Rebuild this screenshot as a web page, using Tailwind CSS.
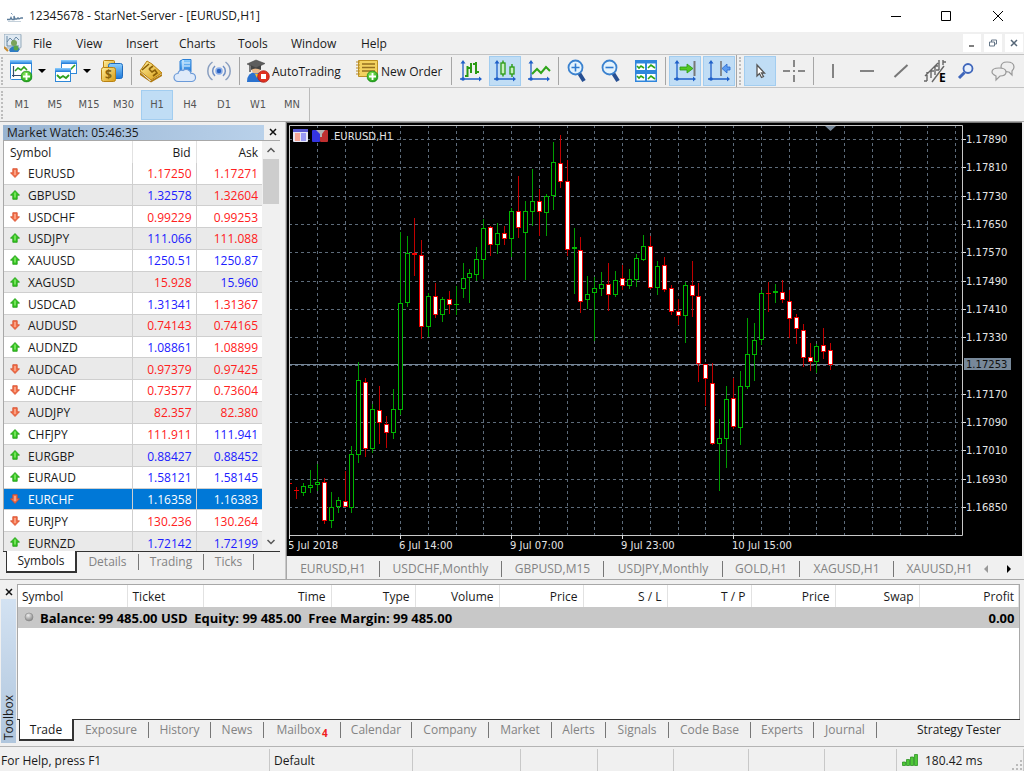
<!DOCTYPE html>
<html lang="en">
<head>
    <meta charset="UTF-8">
    <meta name="viewport" content="width=device-width, initial-scale=1.0">
    <title>12345678 - StarNet-Server - [EURUSD,H1]</title>
    <script src="https://cdn.jsdelivr.net/npm/@tailwindcss/browser@4"></script>
</head>
<body class="bg-[#f0f0f0] text-[#1a1a1a] text-[12px] leading-4 font-['Open_Sans','Noto_Sans',sans-serif]">

    <!-- Shared icons -->
    <svg class="absolute w-0 h-0" aria-hidden="true">
        <defs>
            <linearGradient id="blue" x1="0" y1="0" x2="0" y2="1"><stop offset="0" stop-color="#8fd0ff"/><stop offset="1" stop-color="#1c78d8"/></linearGradient>
            <linearGradient id="gold" x1="0" y1="0" x2="1" y2="1"><stop offset="0" stop-color="#fff0a0"/><stop offset="1" stop-color="#d79a10"/></linearGradient>
            <radialGradient id="green" cx=".4" cy=".3" r=".8"><stop offset="0" stop-color="#8ae85c"/><stop offset="1" stop-color="#129a10"/></radialGradient>
            <radialGradient id="grey" cx=".4" cy=".3" r=".8"><stop offset="0" stop-color="#eeeeee"/><stop offset="1" stop-color="#777777"/></radialGradient>
        </defs>
        <symbol id="plus" viewBox="0 0 12 12"><circle cx="6" cy="6" r="5.5" fill="url(#green)" stroke="#1c8a1c" stroke-width=".8"/><path d="M6 2.5v7M2.5 6h7" stroke="#fff" stroke-width="1.8"/></symbol>
        <symbol id="up" viewBox="0 0 10 10"><path d="M5 .5 9.5 5.2H7.2V9.3H2.8V5.2H.5z" fill="#35c421" stroke="#1f9c14" stroke-width=".8"/><path d="M5 2.5v5" stroke="#8cf070" stroke-width="1.4"/></symbol>
        <symbol id="down" viewBox="0 0 10 10"><path d="M5 9.5 9.5 4.8H7.2V.7H2.8V4.8H.5z" fill="#f0704a" stroke="#d84a28" stroke-width=".8"/><path d="M5 2v5" stroke="#ffb49a" stroke-width="1.4"/></symbol>
        <symbol id="axes" viewBox="0 0 24 24"><path d="M4 3v18M1 20h20" stroke="#1f5fc8" stroke-width="1.3"/><path d="M1.500 4.500 4 1l2.500 3.500zM20 17.500l3 2.500-3 2.500z" fill="#1f5fc8"/><circle cx="4" cy="20" r="1.800" fill="#1f5fc8"/></symbol>
    </svg>

    <div class="flex flex-col min-h-screen">

        <!-- Title bar -->
        <header class="flex items-center h-8 bg-white pl-[7px]">
            <svg class="w-4 h-4 mr-[6px]" viewBox="0 0 16 16" fill="none"><path d="M0 11.500h3l1-2 1 2h2V8l1 3h2q1-2 2 0l2-1h2" stroke="#5d7d9b" stroke-width="1.300"/><path d="M1 13.500h13" stroke="#c4d0da"/><path d="M4 5l1.500 1.500" stroke="#7a9ab8"/></svg>
            <h1 class="flex-1">12345678 - StarNet-Server - [EURUSD,H1]</h1>
            <button aria-label="Minimize" class="w-[50px] h-8 flex items-center justify-center"><svg class="w-3 h-3" viewBox="0 0 12 12"><path d="M1 6.500h10" stroke="#000"/></svg></button>
            <button aria-label="Maximize" class="w-[50px] h-8 flex items-center justify-center"><svg class="w-3 h-3" viewBox="0 0 12 12"><path d="M1.500 1.500h9v9h-9z" fill="none" stroke="#000"/></svg></button>
            <button aria-label="Close" class="w-[53px] h-8 flex items-center justify-center"><svg class="w-3 h-3" viewBox="0 0 12 12"><path d="M1 1l10 10M11 1 1 11" stroke="#000"/></svg></button>
        </header>

        <!-- Menu bar -->
        <nav class="flex items-center h-[22px] pl-1 *:[a]:pt-[2px]">
            <svg class="w-[18px] h-[18px] mr-[1px]" viewBox="0 0 18 18"><rect x="0" y="0" width="17" height="14" rx="1" fill="#dfe9f2" stroke="#93a9ba"/><path d="M3 2v10h12M3 8l3-4 3 3 3-4 3 3" fill="none" stroke="#6b8aa5"/><circle cx="10" cy="9" r="3" fill="#7aa35a"/><path d="M5 16q4-7 11-1l-2 3H6z" fill="#2e7bc4"/><circle cx="12" cy="14" r="2.500" fill="#57a64a"/><path d="M0 13l4 4" stroke="#c78b31" stroke-width="2"/></svg>
            <a href="#" class="px-[10px] w-[46px]">File</a>
            <a href="#" class="px-[7px] w-[50px]">View</a>
            <a href="#" class="px-[7px] w-[54px]">Insert</a>
            <a href="#" class="px-[6px] w-[58px]">Charts</a>
            <a href="#" class="px-[7px] w-[53px]">Tools</a>
            <a href="#" class="px-[7px] w-[70px]">Window</a>
            <a href="#" class="px-[7px]">Help</a>
            <div class="ml-auto flex gap-[3px] pr-[1px]">
                <button aria-label="Minimize chart" class="w-[18px] h-[18px] bg-white flex items-center justify-center"><svg class="w-2 h-2" viewBox="0 0 8 8"><path d="M1 7h5" stroke="#555" stroke-width="1.500"/></svg></button>
                <button aria-label="Restore chart" class="w-[18px] h-[18px] bg-white flex items-center justify-center"><svg class="w-2 h-2" viewBox="0 0 8 8" fill="none" stroke="#678"><path d="M2.500 3V1h5v4H5.500"/><path d="M.5 3h5v4h-5z"/></svg></button>
                <button aria-label="Close chart" class="w-[18px] h-[18px] bg-white flex items-center justify-center"><svg class="w-2 h-2" viewBox="0 0 8 8"><path d="M1 1l6 6M7 1 1 7" stroke="#567" stroke-width="1.500"/></svg></button>
            </div>
        </nav>

        <!-- Main toolbar -->
        <div class="flex items-center h-[34px] border-t border-b border-[#c3c3c3] overflow-hidden *:shrink-0">
            <div class="w-[2px] h-7 ml-[1px] mr-[6px] border-l-2 border-dotted border-[#bdbdbd]"></div>
            <button aria-label="New chart" class="flex items-center w-[45px]">
                <svg class="w-6 h-6" viewBox="0 0 24 24"><rect x="1.500" y="1.500" width="21" height="19" rx="1" fill="#fff" stroke="#2f88d8"/><path d="M1 1h22v4H1z" fill="url(#blue)"/><path d="M4.500 7v11M3 16.500h15" stroke="#36506e" stroke-width="1.200"/><path d="M6 12l3-3 3 2 3-3 3 3" fill="none" stroke="#2fa01e" stroke-width="1.600"/><use href="#plus" x="11.500" y="11.500" width="12" height="12"/></svg>
                <svg class="w-2 h-1 ml-[5px]" viewBox="0 0 8 4"><path d="M0 0h8L4 4z"/></svg>
            </button>
            <button aria-label="Profiles" class="flex items-center w-[46px]">
                <svg class="w-6 h-6" viewBox="0 0 24 24"><rect x="7.500" y="1.500" width="15" height="13" fill="#fff" stroke="#2f88d8"/><path d="M7 1h16v4H7z" fill="url(#blue)"/><path d="M16 11l5-5" stroke="#2fa01e" stroke-width="1.600"/><rect x="1.500" y="9.500" width="15" height="13" fill="#fff" stroke="#2f88d8"/><path d="M1 9h16v4H1z" fill="url(#blue)"/><path d="M3 16l3 3 3-2 3 2 3-3" fill="none" stroke="#2fa01e" stroke-width="1.800"/></svg>
                <svg class="w-2 h-1 ml-[5px]" viewBox="0 0 8 4"><path d="M0 0h8L4 4z"/></svg>
            </button>
            <button aria-label="Market watch" class="w-6"><svg class="w-6 h-6" viewBox="0 0 24 24"><rect x="3.500" y="1.500" width="11" height="13" rx="1" fill="url(#gold)" stroke="#b98212"/><rect x="8.500" y="4.500" width="14" height="15" rx="2" fill="url(#blue)" stroke="#1f6cc0"/><rect x="1.500" y="8.500" width="14" height="14" rx="2" fill="url(#gold)" stroke="#b98212"/><text x="8.500" y="20" font-size="12" font-weight="700" text-anchor="middle" fill="#8a6410">$</text></svg></button>
            <div class="w-px h-7 ml-[7px] mr-[2px] bg-[#a6a6a6]"></div>

            <button aria-label="Depth of market" class="w-[34px] flex justify-center"><svg class="w-6 h-6" viewBox="0 0 24 24"><path d="M1 13 11 22l12-7v2L12 23.500 1 16z" fill="#b07a10"/><path d="M8 2l5 3 10 9-11 7L1 12z" fill="url(#gold)" stroke="#b98212"/><path d="M3 11l7-6M10 10l4-3M10 10l3 3 3-2 2 3-4 3" fill="none" stroke="#8a5f08" stroke-width="1.600"/></svg></button>
            <button aria-label="Cloud storage" class="w-[34px] flex justify-center"><svg class="w-6 h-6" viewBox="0 0 24 24"><path d="M7 2l3-1.500h8V13H7z" fill="url(#blue)" stroke="#2a7fd6"/><path d="M10 1v11M11 4h6M11 7h6" stroke="#e8f6ff" stroke-width="1.200"/><path d="M5 22.500a4 4 0 0 1 0-8 3.500 3.500 0 0 1 5-3 5 5 0 0 1 8 3 4 4 0 0 1 1 8z" fill="#dfeaf9" stroke="#6b9ad8" stroke-width="1.200"/></svg></button>
            <button aria-label="Signals" class="w-[34px] flex justify-center"><svg class="w-6 h-6" viewBox="0 0 24 24" fill="none" stroke="#6f8fc4" stroke-width="1.500"><circle cx="12" cy="12" r="3" fill="#2d66c4" stroke="#8fb0e8"/><path d="M8 7a6.500 6.500 0 0 0 0 10M16 7a6.500 6.500 0 0 1 0 10"/><path d="M5.500 3a11 11 0 0 0 0 18M18.500 3a11 11 0 0 1 0 18" stroke="#8a9fc0"/></svg></button>
            <div class="w-px h-7 ml-[3px] mr-[6px] bg-[#a6a6a6]"></div>

            <button class="flex items-center gap-[2px] w-[109px]">
                <svg class="w-6 h-6" viewBox="0 0 24 24"><path d="M1 23q0-10 9-10t9 10z" fill="#2a72cf"/><circle cx="10" cy="10" r="4.500" fill="#e9b98c"/><path d="M5 6v5q4-3 10 0V6z" fill="#444"/><path d="M1 5l9-4 9 3.500L10 9z" fill="#5d5d5d" stroke="#3a3a3a" stroke-width=".5"/><path d="M4 6v7" stroke="#555" stroke-width="1.500"/><path d="M9 15l2 4 2-4z" fill="#f1c232"/><circle cx="17.500" cy="17.500" r="5.800" fill="#e03020" stroke="#b02015" stroke-width=".8"/><rect x="15" y="15" width="5" height="5" fill="#fff"/></svg>
                <span class="pt-[2px]">AutoTrading</span>
            </button>
            <button class="flex items-center gap-[2px] w-[96px]">
                <svg class="w-6 h-6" viewBox="0 0 24 24"><path d="M3.500 1.500h19v16h-19z" fill="#f3d25f" stroke="#bd9123"/><path d="M7 5h13M7 8.500h13M7 12h13" stroke="#957020" stroke-width="1.300"/><path d="M1 3h4M1 6h4M1 9h4M1 12h4M1 15h4" stroke="#b98c28"/><use href="#plus" x="11.500" y="11.500" width="12" height="12"/></svg>
                <span class="pt-[2px]">New Order</span>
            </button>
            <div class="w-px h-7 mr-[2px] bg-[#a6a6a6]"></div>

            <button aria-label="Bar chart" class="w-[34px] flex justify-center"><svg class="w-6 h-6" viewBox="0 0 24 24"><use href="#axes"/><path d="M8.500 7v11M6 17h2.500M8.500 9H12M12 4v10M17 3v12M14 5h3M17 13h3" fill="none" stroke="#2a9a12" stroke-width="2"/></svg></button>
            <button aria-label="Candlesticks" class="w-8 mx-px h-[30px] flex justify-center items-center bg-[#c0ddf5] border border-[#a2cdf0]"><svg class="w-6 h-6" viewBox="0 0 24 24"><use href="#axes"/><path d="M10 1.500v16M19 5v13" stroke="#2a9a12" stroke-width="1.400"/><rect x="8" y="4" width="4" height="11" fill="#c8f0c0" stroke="#2a9a12" stroke-width="1.300"/><rect x="17" y="8" width="4" height="7" fill="#c8f0c0" stroke="#2a9a12" stroke-width="1.300"/></svg></button>
            <button aria-label="Line chart" class="w-[34px] flex justify-center"><svg class="w-6 h-6" viewBox="0 0 24 24"><use href="#axes"/><path d="M5 15l5-5 4 4 5-6 4 4" fill="none" stroke="#2fa51a" stroke-width="2"/></svg></button>
            <div class="w-px h-7 mx-[2px] bg-[#a6a6a6]"></div>

            <button aria-label="Zoom in" class="w-[34px] flex justify-center"><svg class="w-6 h-6" viewBox="0 0 24 24"><path d="M13 14l5 8" stroke="#274f92" stroke-width="4"/><circle cx="9.500" cy="8.500" r="7" fill="#e4f3fd" stroke="#3b82cf" stroke-width="1.800"/><path d="M5.500 8.500h8M9.500 4.500v8" stroke="#2f7bd0" stroke-width="1.600"/></svg></button>
            <button aria-label="Zoom out" class="w-[34px] flex justify-center"><svg class="w-6 h-6" viewBox="0 0 24 24"><path d="M13 14l5 8" stroke="#274f92" stroke-width="4"/><circle cx="9.500" cy="8.500" r="7" fill="#e4f3fd" stroke="#3b82cf" stroke-width="1.800"/><path d="M5.500 8.500h8" stroke="#2f7bd0" stroke-width="1.600"/></svg></button>
            <button aria-label="Tile windows" class="w-[34px] flex justify-center"><svg class="w-6 h-6" viewBox="0 0 24 24"><rect x="1" y="1" width="22" height="22" fill="#2f86dc"/><path d="M2.500 4.500H11V11H2.500zM13 4.500h8.500V11H13zM2.500 15H11v6.500H2.500zM13 15h8.500v6.500H13z" fill="#fff"/><path d="M3 7l2 2 2-2 3 2M14 9l3-3 4 3M3 17l2 2 2-2 3 2M14 20l3-3 4 3" fill="none" stroke="#2fa51a" stroke-width="1.600"/></svg></button>
            <div class="w-px h-7 mx-[2px] bg-[#a6a6a6]"></div>

            <button aria-label="Auto scroll" class="w-8 mx-px h-[30px] flex justify-center items-center bg-[#c0ddf5] border border-[#a2cdf0]"><svg class="w-6 h-6" viewBox="0 0 24 24"><use href="#axes"/><path d="M21.500 2v15" stroke="#777" stroke-width="2"/><path d="M7 8h7V5l6 4.500-6 4.500v-3H7z" fill="#52c822" stroke="#2a9a12" stroke-width=".8"/></svg></button>
            <button aria-label="Chart shift" class="w-8 mx-px h-[30px] flex justify-center items-center bg-[#c0ddf5] border border-[#a2cdf0]"><svg class="w-6 h-6" viewBox="0 0 24 24"><use href="#axes"/><path d="M14 2v15" stroke="#777" stroke-width="1.600"/><path d="M23 8h-3V5l-5 4.500 5 4.500v-3h3z" fill="#5b9cf0" stroke="#2a68cc" stroke-width=".8"/></svg></button>
            <div class="w-px h-8 bg-[#a6a6a6]"></div>
            <div class="w-[2px] h-7 mx-[2px] border-l-2 border-dotted border-[#bdbdbd]"></div>

            <button aria-label="Cursor" class="w-8 mx-px h-[30px] flex justify-center items-center bg-[#c0ddf5] border border-[#a2cdf0]"><svg class="w-6 h-6" viewBox="0 0 24 24"><path d="M9 6v11l2.500-2.500 2 4 2-1-2-3.500h3z" fill="#fff" stroke="#555" stroke-width="1.300"/></svg></button>
            <button aria-label="Crosshair" class="w-[34px] flex justify-center"><svg class="w-6 h-6" viewBox="0 0 24 24"><path d="M12 1v7M12 16v7M1 12h7M16 12h7M11 12h2" stroke="#666" stroke-width="1.500"/></svg></button>
            <div class="w-px h-7 mx-[2px] bg-[#a6a6a6]"></div>

            <button aria-label="Vertical line" class="w-[34px] flex justify-center"><svg class="w-6 h-6" viewBox="0 0 24 24"><path d="M12 5v14" stroke="#777" stroke-width="1.800"/></svg></button>
            <button aria-label="Horizontal line" class="w-[34px] flex justify-center"><svg class="w-6 h-6" viewBox="0 0 24 24"><path d="M5 12h14" stroke="#777" stroke-width="1.800"/></svg></button>
            <button aria-label="Trendline" class="w-[34px] flex justify-center"><svg class="w-6 h-6" viewBox="0 0 24 24"><path d="M5.500 18 18.500 6" stroke="#777" stroke-width="2"/></svg></button>
            <button aria-label="Elliott wave" class="w-[34px] flex justify-center"><svg class="w-6 h-6" viewBox="0 0 24 24"><path d="M9 23 21 7M2 17 15 4M4 13v9M1 22h3M8 12v7M12 7v9M8 12h3M12 7h3M16 1v10M20 1v5M13 11h3M20 3h3" fill="none" stroke="#666" stroke-width="1.400"/><text x="16" y="23" font-size="12" font-weight="700" fill="#000">E</text></svg></button>
            <button aria-label="Search" class="w-[28px] flex justify-center"><svg class="w-6 h-6" viewBox="0 0 24 24"><path d="M10.500 13.500 5 19" stroke="#3f66bb" stroke-width="3"/><circle cx="14" cy="9.500" r="4.500" fill="#e8f0fc" stroke="#3f66bb" stroke-width="1.800"/></svg></button>
            <button aria-label="Chat" class="ml-[11px] flex justify-center"><svg class="w-6 h-6" viewBox="0 0 24 24" fill="#eee" stroke="#999" stroke-width="1.200"><path d="M16 3c5 0 7 2 7 5 0 2-1 3-2 4v4l-3-3c-6 0-8-2-8-5s2-5 6-5z"/><path d="M8 9c4 0 7 1 7 4s-3 4-6 4l-4 4v-4c-2-1-4-2-4-4s2-4 7-4z"/></svg></button>
        </div>

        <!-- Timeframes -->
        <div class="flex items-center h-[34px] border-b border-[#a8a8a8] text-[#555] text-[11px] font-['DejaVu_Sans_Condensed','DejaVu_Sans',sans-serif]">
            <div class="w-[2px] h-7 ml-[1px] mr-[3px] border-l-2 border-dotted border-[#bdbdbd]"></div>
            <div class="flex items-center h-full border-r border-[#bbb]">
                <button class="w-[32px]">M1</button>
                <button class="w-[34px]">M5</button>
                <button class="w-[34px]">M15</button>
                <button class="w-[35px]">M30</button>
                <button class="w-8 h-[30px] bg-[#c0ddf5] border border-[#a2cdf0]">H1</button>
                <button class="w-[34px]">H4</button>
                <button class="w-[34px]">D1</button>
                <button class="w-[34px]">W1</button>
                <button class="w-[34px]">MN</button>
            </div>
        </div>

        <main class="flex flex-1 min-h-0 border-b border-[#a8a8a8]">

            <!-- Market watch -->
            <section class="flex flex-col w-[286px] pt-[2px] pl-[3px] pr-[5px] pb-[4px] border-r border-[#c8c8c8]">
                <div class="flex h-4 items-center">
                    <h2 class="flex-1 h-[15px] leading-[15px] pl-[4px] bg-linear-to-r from-[#98b4d2] to-[#b9d1ea]">Market Watch: 05:46:35</h2>
                    <button aria-label="Close market watch" class="w-[14px] ml-[2px] flex justify-center"><svg class="w-2 h-2" viewBox="0 0 8 8"><path d="M1 1l6 6M7 1 1 7" stroke="#111" stroke-width="1.500"/></svg></button>
                </div>
                <div class="flex h-[411px] overflow-hidden border-t border-l border-[#a8a8a8]">
                    <div class="flex-1">
                        <table class="w-full h-[413px] table-fixed border-collapse bg-white">
                            <thead>
                                <tr class="h-[22px] *:pt-[2px]">
                                    <th class="pl-[6px] text-left font-normal border-r border-[#e2e2e2]">Symbol</th>
                                    <th class="w-[64px] pr-[5px] text-right font-normal border-r border-[#e2e2e2]">Bid</th>
                                    <th class="w-[66px] pr-[4px] text-right font-normal">Ask</th>
                                </tr>
                            </thead>
                            <tbody id="quotes"></tbody>
                        </table>
                    </div>
                    <div class="flex flex-col items-center w-[18px]">
                        <svg class="w-2 h-2 my-[5px] shrink-0" viewBox="0 0 8 8"><path d="M.5 6 4 2.500 7.500 6" fill="none" stroke="#555" stroke-width="1.500"/></svg>
                        <div class="w-4 h-[45px] bg-[#cdcdcd]"></div>
                        <svg class="w-2 h-2 mt-auto mb-[5px]" viewBox="0 0 8 8"><path d="M.5 2 4 5.500 7.500 2" fill="none" stroke="#555" stroke-width="1.500"/></svg>
                    </div>
                </div>
                <div class="flex items-start h-[22px] border-t border-[#333] text-[#838383]">
                    <button class="w-[71px] h-[22px] -mt-px ml-[3px] bg-white border-l border-r-2 border-b-2 border-[#333] text-[#1a1a1a]">Symbols</button>
                    <button class="w-[62px] h-4 mt-[2px] border-r border-[#777]">Details</button>
                    <button class="w-[65px] h-4 mt-[2px] border-r border-[#777]">Trading</button>
                    <button class="w-[50px] h-4 mt-[2px] border-r border-[#777]">Ticks</button>
                </div>
            </section>

            <!-- Chart -->
            <section class="flex-1 flex flex-col min-w-0 pr-[2px]">
                <div class="bg-black h-[434px] pt-px pl-[2px] border-t border-l border-[#777]">
                    <svg id="chart" class="w-full h-full" viewBox="289 124 733 432" preserveAspectRatio="xMinYMin meet" font-family="'DejaVu Sans', sans-serif" font-size="10" fill="#e4e4e4"></svg>
                </div>
                <div class="flex items-center h-[23px] pt-[2px] text-[#838383] overflow-hidden border-l border-[#a8a8a8]">
                    <div class="flex flex-1 min-w-0 overflow-hidden whitespace-nowrap *:shrink-0 *:border-r *:border-[#777]">
                        <button class="w-[93px]">EURUSD,H1</button>
                        <button class="w-[122px]">USDCHF,Monthly</button>
                        <button class="w-[102px]">GBPUSD,M15</button>
                        <button class="w-[119px]">USDJPY,Monthly</button>
                        <button class="w-[77px]">GOLD,H1</button>
                        <button class="w-[94px]">XAGUSD,H1</button>
                        <button class="w-[92px]">XAUUSD,H1</button>
                    </div>
                    <button aria-label="Previous tabs" class="ml-[13px]"><svg class="w-1 h-2" viewBox="0 0 4 8"><path d="M4 0v8L0 4z" fill="#999"/></svg></button>
                    <button aria-label="Next tabs" class="ml-[19px] mr-[11px]"><svg class="w-1 h-2" viewBox="0 0 4 8"><path d="M0 0v8l4-4z" fill="#000"/></svg></button>
                </div>
            </section>
        </main>

        <!-- Toolbox -->
        <section class="flex h-[167px] pt-[4px] pr-[4px] pb-[3px] border-b border-[#b4b4b4]">
            <div class="flex flex-col items-center w-[17px]">
                <button aria-label="Close toolbox" class="w-4 h-[15px] flex items-center justify-center"><svg class="w-2 h-2" viewBox="0 0 8 8"><path d="M1 1l6 6M7 1 1 7" stroke="#111" stroke-width="1.500"/></svg></button>
                <h2 class="flex-1 w-[15px] leading-[15px] rotate-180 [writing-mode:vertical-rl] pt-[3px] bg-linear-to-b from-[#b0c6dd] to-[#d3e2f2]">Toolbox</h2>
            </div>
            <div class="flex-1 flex flex-col min-w-0">
                <div class="flex-1 bg-white border-t border-l border-r border-[#a8a8a8]">
                    <table class="w-full table-fixed border-collapse">
                        <thead>
                            <tr class="h-[22px] *:pt-[2px] *:font-normal *:border-r *:border-[#e2e2e2]">
                                <th class="w-[109px] pl-[4px] text-left">Symbol</th>
                                <th class="w-[76px] pl-[5px] text-left">Ticket</th>
                                <th class="w-[128px] pr-[5px] text-right">Time</th>
                                <th class="w-[84px] pr-[5px] text-right">Type</th>
                                <th class="w-[84px] pr-[5px] text-right">Volume</th>
                                <th class="w-[84px] pr-[5px] text-right">Price</th>
                                <th class="w-[84px] pr-[5px] text-right">S / L</th>
                                <th class="w-[84px] pr-[5px] text-right">T / P</th>
                                <th class="w-[84px] pr-[5px] text-right">Price</th>
                                <th class="w-[84px] pr-[5px] text-right">Swap</th>
                                <th class="pr-[4px] text-right">Profit</th>
                            </tr>
                        </thead>
                        <tbody>
                            <tr class="h-[21px] bg-[#c8c8c8] text-[13px] text-black font-bold">
                                <td colspan="10" class="pl-[6px] whitespace-pre"><svg class="inline w-[10px] h-[10px] mr-[6px] -mt-1" viewBox="0 0 10 10"><circle cx="5" cy="5" r="4" fill="url(#grey)" stroke="#888" stroke-width=".6"/></svg>Balance: 99 485.00 USD  Equity: 99 485.00  Free Margin: 99 485.00</td>
                                <td class="pr-[4px] text-right">0.00</td>
                            </tr>
                        </tbody>
                    </table>
                </div>
                <div class="flex items-start h-6 border-t border-[#333] text-[#838383]">
                    <button class="w-[55px] h-[22px] -mt-px ml-[2px] pt-px bg-white border-l border-r-2 border-b-2 border-[#333] text-[#1a1a1a]">Trade</button>
                    <button class="w-[75px] h-4 mt-[2px] border-r border-[#777]">Exposure</button>
                    <button class="w-[62px] h-4 mt-[2px] border-r border-[#777]">History</button>
                    <button class="w-[53px] h-4 mt-[2px] border-r border-[#777]">News</button>
                    <button class="w-[77px] h-4 mt-[2px] border-r border-[#777]">Mailbox <sub class="-ml-[2px] text-[10px] leading-none font-bold text-[#f02020]">4</sub></button>
                    <button class="w-[71px] h-4 mt-[2px] border-r border-[#777]">Calendar</button>
                    <button class="w-[77px] h-4 mt-[2px] border-r border-[#777]">Company</button>
                    <button class="w-[63px] h-4 mt-[2px] border-r border-[#777]">Market</button>
                    <button class="w-[54px] h-4 mt-[2px] border-r border-[#777]">Alerts</button>
                    <button class="w-[63px] h-4 mt-[2px] border-r border-[#777]">Signals</button>
                    <button class="w-[82px] h-4 mt-[2px] border-r border-[#777]">Code Base</button>
                    <button class="w-[63px] h-4 mt-[2px] border-r border-[#777]">Experts</button>
                    <button class="w-[63px] h-4 mt-[2px] border-r border-[#777]">Journal</button>
                    <button class="h-4 mt-[2px] ml-auto mr-[19px] text-[#1a1a1a] whitespace-nowrap">Strategy Tester</button>
                </div>
            </div>
        </section>

        <!-- Status bar -->
        <footer class="flex h-6 pt-[2px] *:border-r *:border-[#c8c8c8] *:leading-6">
            <div class="w-[270px] pl-[1px]">For Help, press F1</div>
            <div class="w-[143px] pl-[4px]">Default</div>
            <div class="w-[108px]"></div>
            <div class="w-[77px]"></div>
            <div class="w-[76px]"></div>
            <div class="w-[75px]"></div>
            <div class="w-[76px]"></div>
            <div class="w-[72px]"></div>
            <div class="flex flex-1 items-center gap-[7px] pl-[5px]">
                <svg class="w-4 h-3" viewBox="0 0 16 12"><path d="M.5 8h3v3.500h-3zM4.500 5.500h3v6h-3zM8.500 3h3v8.500h-3zM12.500.5h3v11h-3z" fill="#4fc838" stroke="#1d8a12" stroke-width=".7"/></svg>
                <span class="pt-[2px]">180.42 ms</span>
                <svg class="w-3 h-3 ml-auto self-end" viewBox="0 0 12 12"><path d="M9 1h2v2H9zM5 5h2v2H5zM9 5h2v2H9zM1 9h2v2H1zM5 9h2v2H5zM9 9h2v2H9z" fill="#bbb"/></svg>
            </div>
        </footer>
    </div>

    <script>
        // symbol, direction, bid, bid direction, ask, ask direction
        const quotes = [
            ['EURUSD', 'down', '1.17250', 'r', '1.17271', 'r'],
            ['GBPUSD', 'up', '1.32578', 'b', '1.32604', 'r'],
            ['USDCHF', 'down', '0.99229', 'r', '0.99253', 'r'],
            ['USDJPY', 'up', '111.066', 'b', '111.088', 'r'],
            ['XAUUSD', 'up', '1250.51', 'b', '1250.87', 'b'],
            ['XAGUSD', 'up', '15.928', 'r', '15.960', 'b'],
            ['USDCAD', 'up', '1.31341', 'b', '1.31367', 'r'],
            ['AUDUSD', 'down', '0.74143', 'r', '0.74165', 'r'],
            ['AUDNZD', 'up', '1.08861', 'b', '1.08899', 'r'],
            ['AUDCAD', 'down', '0.97379', 'r', '0.97425', 'r'],
            ['AUDCHF', 'down', '0.73577', 'r', '0.73604', 'r'],
            ['AUDJPY', 'down', '82.357', 'r', '82.380', 'r'],
            ['CHFJPY', 'up', '111.911', 'r', '111.941', 'b'],
            ['EURGBP', 'up', '0.88427', 'b', '0.88452', 'b'],
            ['EURAUD', 'up', '1.58121', 'b', '1.58145', 'b'],
            ['EURCHF', 'down', '1.16358', 'w', '1.16383', 'w'],
            ['EURJPY', 'down', '130.236', 'r', '130.264', 'r'],
            ['EURNZD', 'up', '1.72142', 'b', '1.72199', 'b'],
        ];
        const colors = { r: 'text-[#ff2020]', b: 'text-[#2020ff]', w: 'text-white' };

        document.getElementById('quotes').innerHTML = quotes.map(([symbol, dir, bid, bidDir, ask, askDir], i) => {
            const row = symbol === 'EURCHF' ? 'bg-[#0078d7] text-white' : i % 2 ? 'bg-[#eaeaea]' : 'bg-white';
            return `
                <tr class="${row} border-b border-[#cfcfcf] *:pt-[2px]">
                    <td class="pl-[6px] border-r border-[#cfcfcf]"><svg class="inline w-[10px] h-[10px] mr-[8px] -mt-1"><use href="#${dir}"/></svg>${symbol}</td>
                    <td class="pr-[4px] text-right border-r border-[#cfcfcf] ${colors[bidDir]}">${bid}</td>
                    <td class="pr-[4px] text-right ${colors[askDir]}">${ask}</td>
                </tr>`;
        }).join('');

        // up/down, body top, body bottom, high, low
        const candles = [
            ['d', 483, 484, 482, 485], ['d', 490, 491, 487, 499], ['u', 486, 493, 483, 496], ['u', 485, 488, 470, 493],
            ['u', 482, 485, 464, 491], ['d', 482, 521, 478, 524], ['u', 507, 521, 492, 528], ['u', 500, 507, 497, 513],
            ['d', 501, 507, 471, 507], ['u', 454, 508, 446, 513], ['u', 380, 455, 362, 463], ['d', 382, 449, 378, 457],
            ['u', 409, 449, 404, 453], ['d', 410, 423, 386, 444], ['d', 424, 433, 416, 448], ['u', 409, 433, 389, 439],
            ['u', 303, 410, 232, 415], ['u', 253, 303, 236, 307], ['d', 253, 255, 218, 276], ['d', 255, 327, 240, 339],
            ['u', 296, 327, 293, 337], ['d', 296, 315, 283, 318], ['u', 299, 315, 297, 322], ['d', 299, 305, 291, 314],
            ['u', 304, 305, 286, 315], ['u', 278, 289, 263, 298], ['u', 273, 278, 269, 303], ['u', 259, 275, 247, 281],
            ['u', 228, 260, 219, 279], ['d', 227, 245, 226, 256], ['u', 233, 245, 223, 254], ['d', 233, 239, 226, 245],
            ['u', 211, 239, 208, 257], ['d', 211, 228, 176, 238], ['u', 211, 233, 201, 280], ['u', 201, 212, 169, 226],
            ['d', 201, 212, 189, 236], ['u', 196, 213, 194, 236], ['u', 162, 196, 142, 210], ['d', 163, 182, 135, 188],
            ['d', 181, 250, 160, 256], ['u', 247, 249, 228, 294], ['d', 250, 302, 237, 313], ['u', 294, 300, 276, 309],
            ['u', 288, 293, 277, 341], ['u', 284, 289, 272, 296], ['d', 284, 295, 263, 311], ['u', 280, 295, 271, 297],
            ['d', 278, 286, 265, 290], ['u', 279, 286, 269, 289], ['u', 258, 280, 254, 287], ['u', 246, 260, 235, 261],
            ['d', 246, 288, 236, 289], ['u', 266, 288, 261, 295], ['d', 265, 290, 257, 292], ['d', 288, 312, 285, 315],
            ['d', 311, 316, 299, 325], ['u', 285, 316, 282, 343], ['d', 285, 296, 261, 317], ['d', 296, 364, 283, 382],
            ['d', 364, 379, 364, 406], ['d', 383, 444, 363, 445], ['u', 438, 444, 419, 491], ['u', 399, 439, 386, 468],
            ['d', 398, 427, 378, 429], ['u', 386, 428, 371, 445], ['u', 354, 387, 318, 389], ['u', 340, 355, 323, 381],
            ['u', 293, 340, 290, 345], ['d', 293, 294, 282, 312], ['u', 291, 293, 284, 303], ['d', 292, 300, 280, 303],
            ['d', 301, 319, 290, 338], ['d', 317, 329, 314, 344], ['d', 330, 358, 324, 367], ['d', 357, 362, 343, 371],
            ['u', 346, 362, 344, 373], ['d', 345, 352, 328, 359], ['d', 350, 365, 343, 370],
        ];

        const left = 289, plotTop = 125, right = 962, bottom = 535;
        let svg = '';

        // Grid, four candles per column
        for (let i = 1; i <= 24; i++) {
            const x = Math.round(left + i * 27.75) + 0.5;
            svg += `<path d="M${x} ${plotTop}V${bottom}" stroke="#5d6b7a" stroke-dasharray="3 3"/>`;
        }
        for (let i = 0; i < 14; i++) {
            const y = Math.round(139 + i * 28.3) + 0.5;
            svg += `<path d="M${left} ${y}H${right}" stroke="#5d6b7a" stroke-dasharray="3 3"/>`;
            if (i !== 8) {
                svg += `<path d="M${right} ${y}h4" stroke="#ddd"/><text x="966" y="${y + 3.5}">${(1.1789 - i * 0.0008).toFixed(5)}</text>`;
            }
        }

        // Current price
        svg += `<path d="M${left} 364.5H${right}" stroke="#778899"/>`;

        // The body is a coloured bar with a narrower one inside it
        candles.forEach(([dir, open, close, high, low], i) => {
            const x = Math.round(left + i * 6.94);
            const line = dir === 'u' ? '#00b800' : '#ee0000';
            const wick = dir === 'u' ? '#009c00' : '#c00000';
            svg += `<rect x="${x}" y="${high}" width="1" height="${low - high}" fill="${wick}"/>`;
            svg += `<rect x="${x - 2}" y="${open}" width="5" height="${Math.max(close - open, 1)}" fill="${line}"/>`;
            if (close - open > 2) {
                svg += `<rect x="${x - 1}" y="${open + 1}" width="3" height="${close - open - 2}" fill="${dir === 'u' ? '#000' : '#fff'}"/>`;
            }
        });

        // Frame, time axis and labels
        svg += `<path d="M289.5 ${bottom + 0.5}V125.5H962.5V${bottom + 0.5}z" fill="none" stroke="#c8c8c8"/>`;
        [['5 Jul 2018', 289], ['6 Jul 14:00', 400], ['9 Jul 07:00', 511], ['9 Jul 23:00', 622], ['10 Jul 15:00', 733]].forEach(([label, x]) => {
            svg += `<path d="M${x + 0.5} ${bottom}v4" stroke="#ddd"/><text x="${x - 1}" y="549">${label}</text>`;
        });
        svg += `<rect x="964" y="358" width="47" height="12" fill="#778899"/><text x="966" y="368" fill="#111">1.17253</text>`;
        svg += `<path d="M825 126h11l-5.5 5z" fill="#778899"/>`;

        // One-click trading and depth buttons
        svg += `<rect x="293" y="129" width="15" height="13" rx="1" fill="#e6e6f4"/><path d="M293 129h15v3h-15z" fill="#5a5ad0"/><path d="M295 133h5v8h-5z" fill="#f5a596"/><path d="M301 133h5v8h-5z" fill="#9a9af4"/>`;
        svg += `<rect x="312" y="130" width="8" height="12" rx="1" fill="#3434e0"/><rect x="320" y="130" width="8" height="12" rx="1" fill="#c03030"/><path d="M316 130h9l-3 4v3h-2v-3z" fill="#b4b4b4"/>`;
        svg += `<text x="334" y="140">EURUSD,H1</text>`;

        document.getElementById('chart').innerHTML = svg;
    </script>

</body>
</html>
